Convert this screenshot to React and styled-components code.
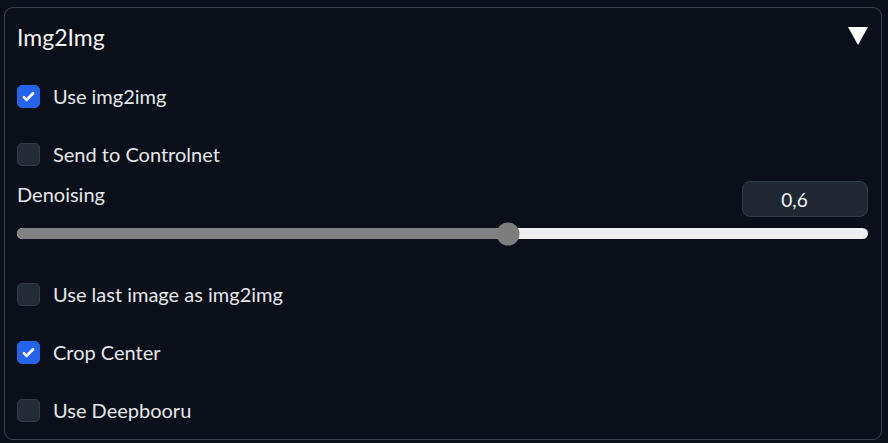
import React from "react";
import styled, { createGlobalStyle } from "styled-components";

const Global = createGlobalStyle`
  html, body { margin: 0; padding: 0; background: #0b0f19; }
  body { font-family: Lato, "Noto Sans", sans-serif; color: #e5e7eb; }
  * { box-sizing: border-box; }
`;

const Page = styled.div`
  width: 888px;
  height: 443px;
  padding: 7px 6px 3px 4px;
`;

const Panel = styled.div`
  height: 433px;
  border: 1px solid #3b4352;
  border-radius: 9px;
  background: #0b0f19;
  padding: 0 13px 0 12px;
  display: flex;
  flex-direction: column;
`;

const Header = styled.div`
  height: 58px;
  display: flex;
  align-items: center;
  justify-content: space-between;
`;

const Title = styled.div`
  font-size: 23px;
  color: #f3f4f6;
  margin-top: -1px;
`;

const Arrow = styled.svg`
  width: 20px;
  height: 18px;
  margin-top: -2px;
`;

const Rows = styled.div`
  display: flex;
  flex-direction: column;
  gap: ${(p) => p.$gap}px;
  margin-top: ${(p) => p.$top}px;
`;

const Row = styled.label`
  display: flex;
  align-items: center;
  gap: 13px;
  height: 24px;
  font-size: 20px;
  color: #e5e7eb;
`;

const Box = styled.span`
  width: 23px;
  height: 23px;
  border-radius: 5px;
  display: flex;
  align-items: center;
  justify-content: center;
  background: ${(p) => (p.$checked ? "#2563eb" : "#232b37")};
  border: 1px solid ${(p) => (p.$checked ? "#2563eb" : "#323b48")};
`;

const SliderBlock = styled.div`
  margin-top: 15px;
  display: flex;
  flex-direction: column;
`;

const SliderHead = styled.div`
  display: flex;
  justify-content: space-between;
  align-items: flex-start;
  height: 36px;
`;

const SliderLabel = styled.div`
  font-size: 20px;
  line-height: 26px;
  color: #e5e7eb;
`;

const NumberBox = styled.div`
  width: 126px;
  height: 36px;
  border-radius: 8px;
  border: 1px solid #343c49;
  background: #1f2733;
  display: flex;
  align-items: center;
  justify-content: center;
  padding-right: 21px;
  font-size: 19px;
  color: #f3f4f6;
`;

const SliderArea = styled.div`
  margin-top: 5px;
  height: 23px;
  display: flex;
  align-items: center;
`;

const Track = styled.div`
  position: relative;
  width: 100%;
  height: 11px;
  border-radius: 6px;
  background: #efefef;
`;

const Fill = styled.div`
  height: 100%;
  border-radius: 6px 0 0 6px;
  background: #818181;
`;

const Thumb = styled.div`
  position: absolute;
  top: 50%;
  width: 23px;
  height: 23px;
  border-radius: 50%;
  background: #7d7d7d;
  transform: translate(-50%, -50%);
`;

const Check = () => (
  <svg width="21" height="21" viewBox="0 0 16 16" fill="#fff">
    <path d="M12.207 4.793a1 1 0 010 1.414l-5 5a1 1 0 01-1.414 0l-2-2a1 1 0 011.414-1.414L6.5 9.086l4.293-4.293a1 1 0 011.414 0z" />
  </svg>
);

const CheckRow = ({ checked, children }) => (
  <Row>
    <Box $checked={checked}>{checked && <Check />}</Box>
    <span>{children}</span>
  </Row>
);

export default function App() {
  const pct = 57.7;
  return (
    <Page>
      <Global />
      <Panel>
        <Header>
          <Title>Img2Img</Title>
          <Arrow viewBox="0 0 20 18">
            <polygon points="0,0 20,0 10,18" fill="#fff" />
          </Arrow>
        </Header>
        <Rows $gap={34} $top={18}>
          <CheckRow checked>Use img2img</CheckRow>
          <CheckRow>Send to Controlnet</CheckRow>
        </Rows>
        <SliderBlock>
          <SliderHead>
            <SliderLabel>Denoising</SliderLabel>
            <NumberBox>0,6</NumberBox>
          </SliderHead>
          <SliderArea>
            <Track>
              <Fill style={{ width: `${pct}%` }} />
              <Thumb style={{ left: `${pct}%` }} />
            </Track>
          </SliderArea>
        </SliderBlock>
        <Rows $gap={34} $top={37}>
          <CheckRow>Use last image as img2img</CheckRow>
          <CheckRow checked>Crop Center</CheckRow>
          <CheckRow>Use Deepbooru</CheckRow>
        </Rows>
      </Panel>
    </Page>
  );
}
